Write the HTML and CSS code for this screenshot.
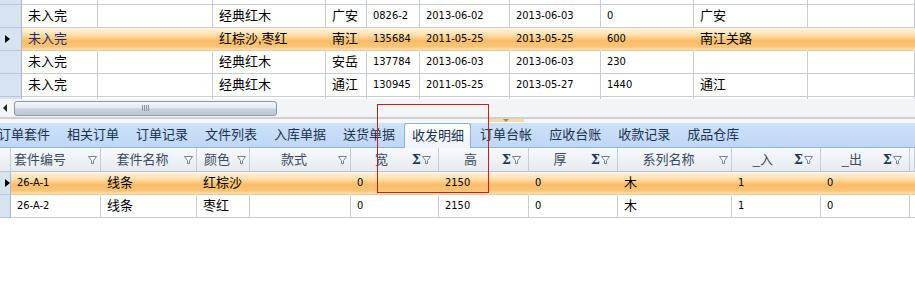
FILE: index.html
```html
<!DOCTYPE html>
<html>
<head>
<meta charset="utf-8">
<link rel="stylesheet" href="styles.css">
</head>
<body>
<div class="top-grid">
  <div class="trow first"><div class="ind"></div><div></div><div></div><div></div><div></div><div></div><div></div><div></div><div></div><div></div><div></div></div>
  <div class="trow"><div class="ind"></div><div>未入完</div><div></div><div>经典红木</div><div>广安</div><div class="n">0826-2</div><div class="n">2013-06-02</div><div class="n">2013-06-03</div><div class="n">0</div><div>广安</div><div></div></div>
  <div class="trow sel"><div class="ind"><span class="arrow"></span></div><div class="focus">未入完</div><div></div><div>红棕沙,枣红</div><div>南江</div><div class="n">135684</div><div class="n">2011-05-25</div><div class="n">2013-05-25</div><div class="n">600</div><div>南江关路</div><div></div></div>
  <div class="trow"><div class="ind"></div><div>未入完</div><div></div><div>经典红木</div><div>安岳</div><div class="n">137784</div><div class="n">2013-06-03</div><div class="n">2013-06-03</div><div class="n">230</div><div></div><div></div></div>
  <div class="trow"><div class="ind"></div><div>未入完</div><div></div><div>经典红木</div><div>通江</div><div class="n">130945</div><div class="n">2011-05-25</div><div class="n">2013-05-27</div><div class="n">1440</div><div>通江</div><div></div></div>
  <div class="trow"><div class="ind"></div><div></div><div></div><div></div><div></div><div></div><div></div><div></div><div></div><div></div><div></div></div>
</div>

<div class="hscroll">
  <span class="larrow"></span>
  <div class="thumb"><span class="grip"></span></div>
</div>

<div class="splitter"><span class="sgrip"><span class="sdown"></span></span></div>

<div class="tabs">
  <span class="tab">订单套件</span>
  <span class="tab">相关订单</span>
  <span class="tab">订单记录</span>
  <span class="tab">文件列表</span>
  <span class="tab">入库单据</span>
  <span class="tab">送货单据</span>
  <span class="tab active">收发明细</span>
  <span class="tab">订单台帐</span>
  <span class="tab">应收台账</span>
  <span class="tab">收款记录</span>
  <span class="tab">成品仓库</span>
</div>

<div class="bgrid">
  <div class="brow head">
    <div class="hind"></div>
    <div class="hc c1"><span class="cap">套件编号</span><svg class="flt" width="9" height="8" viewBox="0 0 9 8"><path d="M0.5 0.5H8.5L5.5 4.5V7.5H3.5V4.5Z" fill="#fff" stroke="#6f819b"/></svg></div>
    <div class="hc"><span class="cap">套件名称</span><svg class="flt" width="9" height="8" viewBox="0 0 9 8"><path d="M0.5 0.5H8.5L5.5 4.5V7.5H3.5V4.5Z" fill="#fff" stroke="#6f819b"/></svg></div>
    <div class="hc"><span class="cap">颜色</span><svg class="flt" width="9" height="8" viewBox="0 0 9 8"><path d="M0.5 0.5H8.5L5.5 4.5V7.5H3.5V4.5Z" fill="#fff" stroke="#6f819b"/></svg></div>
    <div class="hc"><span class="cap">款式</span><svg class="flt" width="9" height="8" viewBox="0 0 9 8"><path d="M0.5 0.5H8.5L5.5 4.5V7.5H3.5V4.5Z" fill="#fff" stroke="#6f819b"/></svg></div>
    <div class="hc sum"><span class="cap">宽</span><span class="sig">Σ</span><svg class="flt" width="9" height="8" viewBox="0 0 9 8"><path d="M0.5 0.5H8.5L5.5 4.5V7.5H3.5V4.5Z" fill="#fff" stroke="#6f819b"/></svg></div>
    <div class="hc sum"><span class="cap">高</span><span class="sig">Σ</span><svg class="flt" width="9" height="8" viewBox="0 0 9 8"><path d="M0.5 0.5H8.5L5.5 4.5V7.5H3.5V4.5Z" fill="#fff" stroke="#6f819b"/></svg></div>
    <div class="hc sum"><span class="cap">厚</span><span class="sig">Σ</span><svg class="flt" width="9" height="8" viewBox="0 0 9 8"><path d="M0.5 0.5H8.5L5.5 4.5V7.5H3.5V4.5Z" fill="#fff" stroke="#6f819b"/></svg></div>
    <div class="hc"><span class="cap">系列名称</span><svg class="flt" width="9" height="8" viewBox="0 0 9 8"><path d="M0.5 0.5H8.5L5.5 4.5V7.5H3.5V4.5Z" fill="#fff" stroke="#6f819b"/></svg></div>
    <div class="hc sum"><span class="cap">_入</span><span class="sig">Σ</span><svg class="flt" width="9" height="8" viewBox="0 0 9 8"><path d="M0.5 0.5H8.5L5.5 4.5V7.5H3.5V4.5Z" fill="#fff" stroke="#6f819b"/></svg></div>
    <div class="hc sum"><span class="cap">_出</span><span class="sig">Σ</span><svg class="flt" width="9" height="8" viewBox="0 0 9 8"><path d="M0.5 0.5H8.5L5.5 4.5V7.5H3.5V4.5Z" fill="#fff" stroke="#6f819b"/></svg></div>
    <div class="hc"></div>
  </div>
  <div class="brow sel"><div class="ind"><span class="arrow"></span></div><div class="n">26-A-1</div><div>线条</div><div>红棕沙</div><div></div><div class="n">0</div><div class="n">2150</div><div class="n">0</div><div>木</div><div class="n">1</div><div class="n">0</div><div></div></div>
  <div class="brow"><div class="ind"></div><div class="n">26-A-2</div><div>线条</div><div>枣红</div><div></div><div class="n">0</div><div class="n">2150</div><div class="n">0</div><div>木</div><div class="n">1</div><div class="n">0</div><div></div></div>
</div>

<div class="mark"></div>
</body>
</html>
```

FILE: styles.css
```css
body {
  margin: 0;
  width: 915px;
  height: 302px;
  overflow: hidden;
  background: #fff;
  position: relative;
  font-family: "Liberation Sans", "Noto Sans CJK SC", sans-serif;
  font-size: 13px;
  color: #000;
}

/* ---------- top grid ---------- */
.top-grid {
  height: 99px;
  overflow: hidden;
}
.trow {
  display: grid;
  grid-template-columns: 22px 76px 115px 113px 41px 53px 90px 91px 93px 114px 107px;
  height: 23px;
}
.trow.first { margin-top: -18px; }
.trow > div,
.brow > div {
  box-sizing: border-box;
  border-right: 1px solid #c8cdd5;
  border-bottom: 1px solid #c8cdd5;
  padding-left: 6px;
  line-height: 22px;
  white-space: nowrap;
  overflow: hidden;
}
.trow > .ind,
.brow > .ind {
  padding: 0;
  background: #d8e3f2;
  border-right-color: #a7b7cc;
  border-bottom-color: #b8c6d9;
  display: flex;
  align-items: center;
}
.n {
  font-family: "DejaVu Sans Condensed", "Liberation Sans", sans-serif;
  font-size: 11px;
}
.sel > div:not(.ind) {
  background: linear-gradient(#fff3df 0%, #fde0b0 30%, #fbbd68 58%, #fbc477 85%, #fde0b4 100%);
  border-right-color: transparent;
  border-bottom-color: #e7c99a;
}
.focus { color: #1b2f72; }
.arrow {
  width: 0;
  height: 0;
  border-top: 4px solid transparent;
  border-bottom: 4px solid transparent;
  border-left: 5px solid #000;
  margin-left: 5px;
}

/* ---------- horizontal scrollbar ---------- */
.hscroll {
  height: 18px;
  background: #f3f4f6;
  display: flex;
  align-items: center;
}
.larrow {
  width: 0;
  height: 0;
  border-top: 4px solid transparent;
  border-bottom: 4px solid transparent;
  border-right: 4px solid #222;
  margin-left: 3px;
}
.thumb {
  box-sizing: border-box;
  width: 263px;
  height: 15px;
  margin-left: 7px;
  border: 1px solid #8b98aa;
  border-radius: 3px;
  background: linear-gradient(#f4f6f9 0%, #e3e8ef 45%, #c7d0db 55%, #bcc6d2 100%);
  display: flex;
  align-items: center;
  justify-content: center;
}
.grip {
  width: 7px;
  height: 6px;
  background: repeating-linear-gradient(90deg, #8a94a2 0 1px, transparent 1px 2px);
}

/* ---------- splitter ---------- */
.splitter {
  box-sizing: border-box;
  height: 6px;
  border-top: 2px solid #cdd1d7;
  background: #f7f7f7;
  display: flex;
  align-items: flex-start;
}
.sgrip {
  width: 36px;
  height: 3px;
  margin-left: 488px;
  background: #f5dca0;
  display: flex;
  justify-content: center;
}
.sdown {
  width: 0;
  height: 0;
  border-left: 3px solid transparent;
  border-right: 3px solid transparent;
  border-top: 3px solid #9a8a60;
}

/* ---------- tabs ---------- */
.tabs {
  box-sizing: border-box;
  height: 25px;
  background: linear-gradient(#cde1f9, #bfd7f6);
  border-bottom: 1px solid #8eb1dd;
  display: flex;
  align-items: flex-end;
  gap: 1px;
  padding-left: 0;
  margin-left: -10px;
  white-space: nowrap;
}
.tab {
  padding: 0 8px;
  height: 23px;
  line-height: 22px;
  color: #1c3150;
  font-size: 13px;
}
.tab.active {
  box-sizing: border-box;
  height: 25px;
  margin-bottom: -1px;
  padding: 0 6px 0 7px;
  line-height: 24px;
  background: linear-gradient(#ffffff, #eef4fc);
  border: 1px solid #8eb1dd;
  border-bottom: none;
  border-radius: 3px 3px 0 0;
}

/* ---------- bottom grid ---------- */
.brow {
  display: grid;
  grid-template-columns: 11px 90px 96px 53px 101px 88px 90px 89px 114px 89px 89px 5px;
  height: 23px;
}
.brow.head {
  height: 24px;
}
.brow.head > div {
  background: linear-gradient(#f7f9fc, #e6ebf2);
  border-right: 1px solid #c3ccd8;
  border-bottom: 1px solid #b7c3d3;
  line-height: 23px;
  padding: 0;
}
.hc {
  display: flex;
  align-items: center;
  color: #3c4b60;
  padding-right: 3px !important;
}
.hc.sum { padding-right: 7px !important; }
.cap {
  flex: 1;
  text-align: center;
}
.c1 .cap {
  text-align: left;
  padding-left: 3px;
}
.flt { flex: none; }
.sig {
  font-family: "DejaVu Serif", serif;
  font-weight: bold;
  font-size: 13px;
  color: #1f3561;
  margin-right: 1px;
  line-height: 12px;
}

/* ---------- annotation ---------- */
.mark {
  position: absolute;
  left: 377px;
  top: 104px;
  width: 110px;
  height: 87px;
  border: 1px solid #d11a1a;
}
```
